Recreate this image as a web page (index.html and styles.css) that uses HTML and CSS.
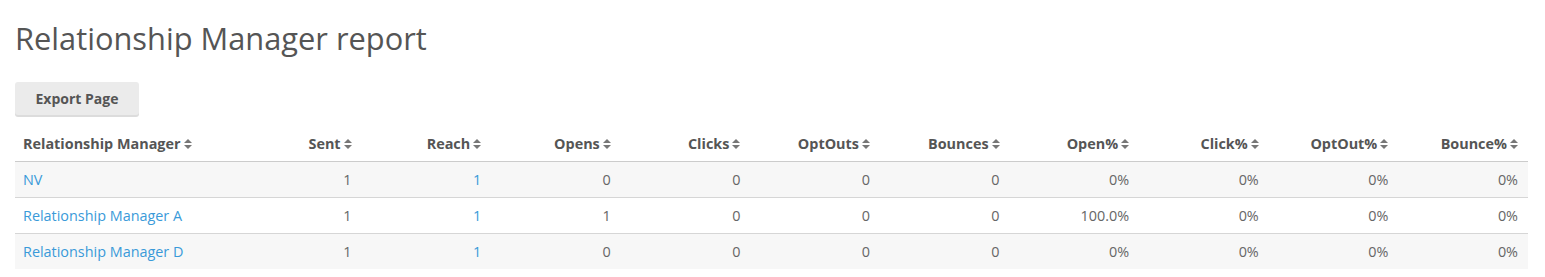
FILE: index.html
```html
<!DOCTYPE html>
<html>
<head>
<meta charset="utf-8">
<link rel="stylesheet" href="styles.css">
</head>
<body>
<div class="page">
  <h1 class="title">Relationship Manager report</h1>
  <div class="toolbar"><button class="btn">Export Page</button></div>
  <table class="report">
    <colgroup>
      <col class="c-name">
      <col class="c-num"><col class="c-num"><col class="c-num"><col class="c-num"><col class="c-num">
      <col class="c-num"><col class="c-num"><col class="c-num"><col class="c-num"><col class="c-num">
    </colgroup>
    <thead>
      <tr>
        <th class="left">Relationship Manager<span class="sort"></span></th>
        <th>Sent<span class="sort"></span></th>
        <th>Reach<span class="sort"></span></th>
        <th>Opens<span class="sort"></span></th>
        <th>Clicks<span class="sort"></span></th>
        <th>OptOuts<span class="sort"></span></th>
        <th>Bounces<span class="sort"></span></th>
        <th>Open%<span class="sort"></span></th>
        <th>Click%<span class="sort"></span></th>
        <th>OptOut%<span class="sort"></span></th>
        <th>Bounce%<span class="sort"></span></th>
      </tr>
    </thead>
    <tbody>
      <tr>
        <td class="left"><a href="#">NV</a></td>
        <td>1</td><td><a href="#">1</a></td><td>0</td><td>0</td><td>0</td><td>0</td><td>0%</td><td>0%</td><td>0%</td><td>0%</td>
      </tr>
      <tr>
        <td class="left"><a href="#">Relationship Manager A</a></td>
        <td>1</td><td><a href="#">1</a></td><td>1</td><td>0</td><td>0</td><td>0</td><td>100.0%</td><td>0%</td><td>0%</td><td>0%</td>
      </tr>
      <tr>
        <td class="left"><a href="#">Relationship Manager D</a></td>
        <td>1</td><td><a href="#">1</a></td><td>0</td><td>0</td><td>0</td><td>0</td><td>0%</td><td>0%</td><td>0%</td><td>0%</td>
      </tr>
    </tbody>
  </table>
</div>
</body>
</html>
```
FILE: styles.css
```css
html, body {
  margin: 0;
  padding: 0;
  background: #fff;
}
body {
  font-family: "Open Sans", "Liberation Sans", sans-serif;
  font-size: 14.4px;
  color: #666;
}
.page {
  padding: 0 17px 0 15px;
}
.title {
  margin: 0;
  padding-top: 18px;
  font-size: 30.8px;
  font-weight: 400;
  line-height: 40px;
  color: #555;
}
.toolbar {
  margin-top: 24px;
  margin-bottom: 11px;
}
.btn {
  font-family: inherit;
  font-size: 14px;
  font-weight: 700;
  color: #555;
  background: #ebebeb;
  border: 0;
  border-radius: 3px;
  box-shadow: 0 2px 0 #dcdcdc;
  height: 33px;
  width: 124px;
  padding: 0;
  margin: 0;
  display: block;
}
.report {
  border-collapse: collapse;
  table-layout: fixed;
  width: 1513px;
}
.c-name { width: 217px; }
.c-num { width: 129.6px; }
.report th {
  text-align: right;
  font-weight: 700;
  color: #555;
  height: 35px;
  padding: 0 10px 0 8px;
  border-bottom: 1px solid #ccc;
  vertical-align: middle;
  white-space: nowrap;
}
.report th.left,
.report td.left {
  text-align: left;
}
.report td {
  text-align: right;
  height: 35px;
  padding: 0 10px 0 8px;
  border-bottom: 1px solid #d6d6d6;
  vertical-align: middle;
  white-space: nowrap;
}
.report tbody tr:nth-child(odd) td {
  background: #f7f7f7;
}
.report tbody tr:last-child td {
  border-bottom: 0;
}
.report a {
  color: #3a9ad9;
  text-decoration: none;
}
.sort {
  display: inline-flex;
  flex-direction: column;
  gap: 2px;
  margin-left: 3px;
  vertical-align: middle;
  position: relative;
  top: -1px;
}
.sort::before,
.sort::after {
  content: "";
  width: 0;
  height: 0;
  border-left: 4px solid transparent;
  border-right: 4px solid transparent;
}
.sort::before {
  border-bottom: 4px solid #777;
}
.sort::after {
  border-top: 4px solid #777;
}
```
